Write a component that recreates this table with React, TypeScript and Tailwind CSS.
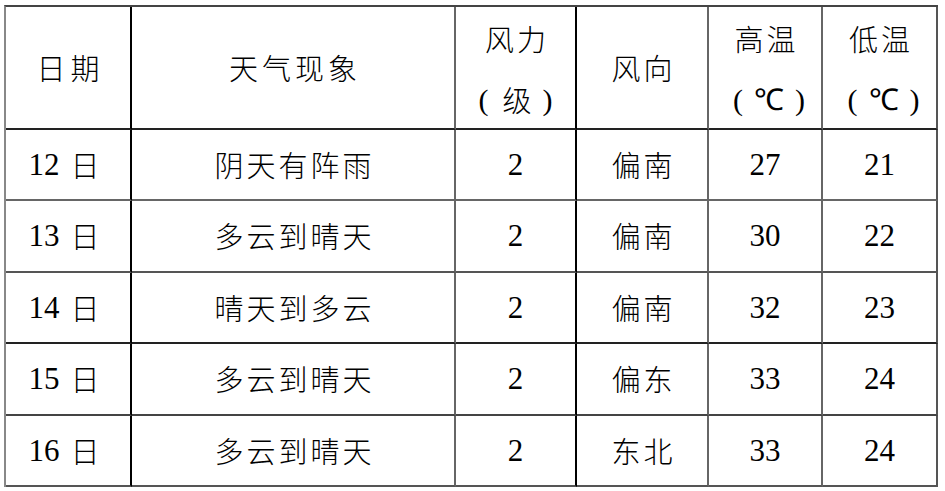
import React from 'react';

const rows = [
    { date: '12', weather: '阴天有阵雨', force: '2', dir: '偏南', high: '27', low: '21' },
    { date: '13', weather: '多云到晴天', force: '2', dir: '偏南', high: '30', low: '22' },
    { date: '14', weather: '晴天到多云', force: '2', dir: '偏南', high: '32', low: '23' },
    { date: '15', weather: '多云到晴天', force: '2', dir: '偏东', high: '33', low: '24' },
    { date: '16', weather: '多云到晴天', force: '2', dir: '东北', high: '33', low: '24' },
];

// right border colour per column, bottom border colour per row
const colBorder = [
    'border-r-black',
    'border-r-[#666]',
    'border-r-black',
    'border-r-[#666]',
    'border-r-[#666]',
    'border-r-[#555]',
];
const rowBorder = [
    'border-b-[#222]',
    'border-b-[#666]',
    'border-b-[#555]',
    'border-b-[#222]',
    'border-b-[#444]',
    'border-b-[#555]',
];

const serif = { fontFamily: "'Liberation Serif', 'Times New Roman', serif" };
const cjk = { fontFamily: "'Noto Sans CJK SC', sans-serif" };

const Cell: React.FC<{ col: number; row: number; children: React.ReactNode }> = ({ col, row, children }) => (
    <div
        className={`flex items-center justify-center text-center border-r-2 border-b-2 ${colBorder[col]} ${rowBorder[row]}`}
    >
        {children}
    </div>
);

const Zh: React.FC<{ children: React.ReactNode; className?: string }> = ({ children, className }) => (
    <span className={`font-light tracking-[3px] pl-[3px] text-[29px] ${className ?? ''}`} style={cjk}>
        {children}
    </span>
);

const Num: React.FC<{ children: React.ReactNode; className?: string }> = ({ children, className }) => (
    <span className={className} style={serif}>
        {children}
    </span>
);

const App: React.FC = () => {
    return (
        <div className="w-[945px] h-[491px] bg-white pt-[5px] pl-[4px]">
            <div className="grid w-[934px] grid-cols-[126px_324px_121px_132px_114px_115px] grid-rows-[122.5px_repeat(5,71.5px)] border-l-2 border-t-2 border-l-[#888] border-t-[#444] text-black text-[30px] leading-none">
                {/* header */}
                <Cell col={0} row={0}><Zh className="tracking-[5px] pl-[5px]">日期</Zh></Cell>
                <Cell col={1} row={0}><Zh className="tracking-[4px] pl-[4px]">天气现象</Zh></Cell>
                <Cell col={2} row={0}>
                    <div className="flex flex-col items-center leading-[61px] pt-[3px]">
                        <Zh>风力</Zh>
                        <span className="flex items-center gap-[11px]">
                            <Num>(</Num><Zh className="pl-0 tracking-normal">级</Zh><Num>)</Num>
                        </span>
                    </div>
                </Cell>
                <Cell col={3} row={0}><Zh>风向</Zh></Cell>
                <Cell col={4} row={0}>
                    <div className="flex flex-col items-center leading-[61px] pt-[3px]">
                        <Zh>高温</Zh>
                        <span className="flex items-center gap-[11px] pl-[8px]">
                            <Num>(</Num><Num>℃</Num><Num>)</Num>
                        </span>
                    </div>
                </Cell>
                <Cell col={5} row={0}>
                    <div className="flex flex-col items-center leading-[61px] pt-[3px]">
                        <Zh>低温</Zh>
                        <span className="flex items-center gap-[11px] pl-[8px]">
                            <Num>(</Num><Num>℃</Num><Num>)</Num>
                        </span>
                    </div>
                </Cell>

                {rows.map((r, i) => (
                    <React.Fragment key={r.date}>
                        <Cell col={0} row={i + 1}>
                            <span className="flex items-center gap-[8px] pr-[8px]">
                                <Num className="text-[31px]">{r.date}</Num>
                                <Zh className="pl-0 tracking-normal">日</Zh>
                            </span>
                        </Cell>
                        <Cell col={1} row={i + 1}><Zh>{r.weather}</Zh></Cell>
                        <Cell col={2} row={i + 1}><Num className="text-[31px]">{r.force}</Num></Cell>
                        <Cell col={3} row={i + 1}><Zh>{r.dir}</Zh></Cell>
                        <Cell col={4} row={i + 1}><Num className="text-[31px]">{r.high}</Num></Cell>
                        <Cell col={5} row={i + 1}><Num className="text-[31px]">{r.low}</Num></Cell>
                    </React.Fragment>
                ))}
            </div>
        </div>
    );
};

export default App;
